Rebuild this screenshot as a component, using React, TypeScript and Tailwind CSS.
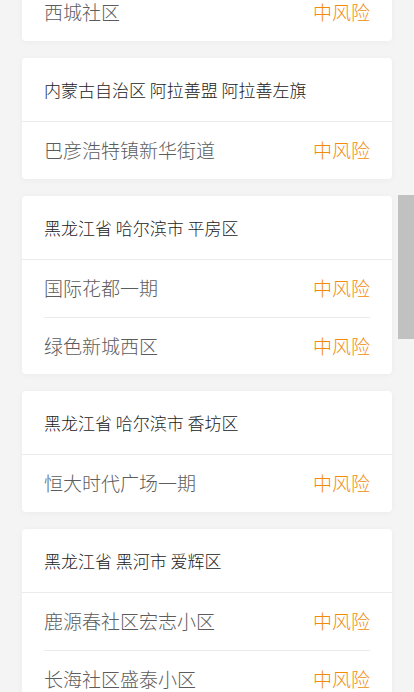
import * as React from "react";

type Area = { region?: string; places: string[] };

const AREAS: Area[] = [
  { places: ["西城社区"] },
  { region: "内蒙古自治区 阿拉善盟 阿拉善左旗", places: ["巴彦浩特镇新华街道"] },
  { region: "黑龙江省 哈尔滨市 平房区", places: ["国际花都一期", "绿色新城西区"] },
  { region: "黑龙江省 哈尔滨市 香坊区", places: ["恒大时代广场一期"] },
  { region: "黑龙江省 黑河市 爱辉区", places: ["鹿源春社区宏志小区", "长海社区盛泰小区", "东兴社区"] },
];

function AreaCard({ area }: { area: Area }) {
  return (
    <div className="mx-[22px] overflow-hidden rounded-[4px] bg-white shadow-[0_1px_6px_rgba(0,0,0,0.04)]">
      {area.region && (
        <div className="flex h-[64px] items-center border-b border-[#ebebeb] px-[22px] pt-[1px] text-[17px] font-light text-[#222]">
          {area.region}
        </div>
      )}
      <div className="px-[22px]">
        {area.places.map((p, i) => (
          <div
            key={p}
            className={
              i > 0
                ? "flex h-[57px] items-center justify-between border-t border-[#ececec]"
                : "flex h-[57px] items-center justify-between"
            }
          >
            <span className="text-[19px] font-light text-[#5c5c5c]">{p}</span>
            <span className="text-[19px] font-light text-[#f38b0a]">中风险</span>
          </div>
        ))}
      </div>
    </div>
  );
}

export default function App() {
  return (
    <div
      className="relative h-[692px] w-[414px] overflow-hidden bg-[#f4f4f4]"
      style={{ fontFamily: '"Noto Sans CJK SC", "Noto Sans", sans-serif' }}
    >
      <div className="-mt-[16px] flex flex-col gap-[17px]">
        {AREAS.map((a, i) => (
          <AreaCard key={i} area={a} />
        ))}
      </div>
      {/* scrollbar thumb */}
      <div className="absolute right-0 top-[195px] h-[144px] w-[16px] bg-[#c1c1c1]" />
    </div>
  );
}
